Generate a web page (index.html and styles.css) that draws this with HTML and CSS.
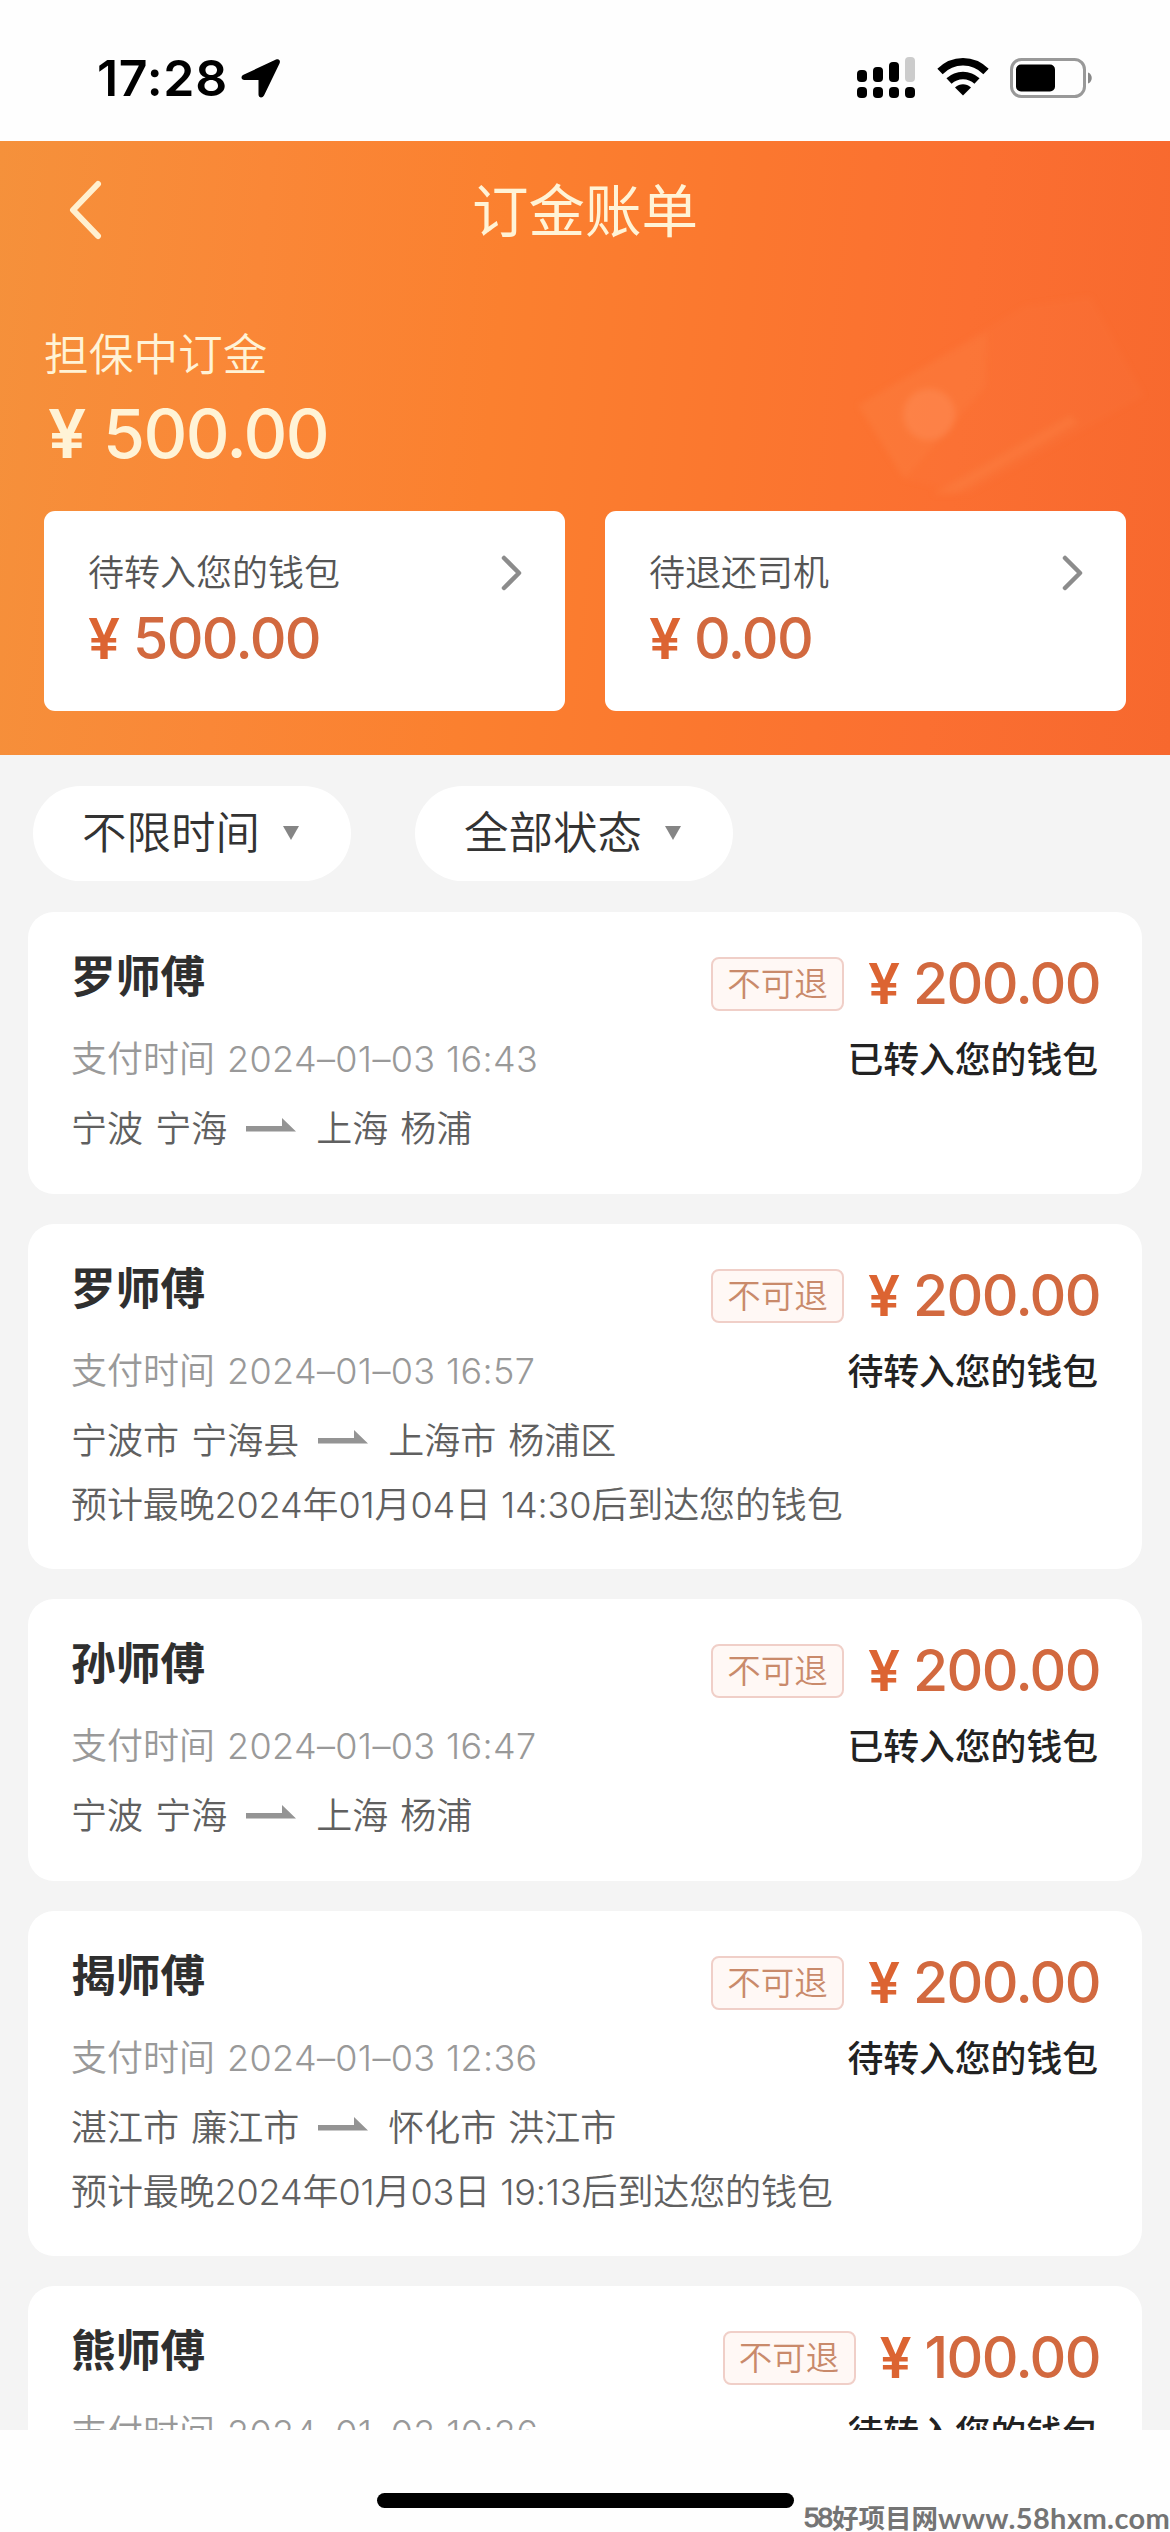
FILE: index.html
```
<!DOCTYPE html>
<html lang="zh-CN">
<head>
<meta charset="utf-8">
<title>订金账单</title>
<link rel="stylesheet" href="styles.css">
</head>
<body>
<svg class="defs" width="0" height="0" aria-hidden="true">
  <symbol id="route-arrow" viewBox="0 0 50 14"><path d="M0 8h36V0l14 13.500H0z"/></symbol>
  <symbol id="chevron" viewBox="0 0 22 36"><path d="M3 3l15 15L3 33"/></symbol>
</svg>
<div class="screen">
  <div class="statusbar">
    <span class="clock">17:28</span>
    <svg class="location" viewBox="0 0 40 40"><path d="M35 1.500 2.500 16.800C-.5 18.200 0 22 3.500 22H17.500V36.500C17.500 40 21.500 40.500 23 37.500L38.500 5.500C39.800 2.500 38 .2 35 1.500z"/></svg>
    <svg class="signal" viewBox="0 0 59 42">
      <rect x="0" y="13" width="10" height="12" rx="4"/><rect x="16" y="10" width="10" height="15" rx="4"/><rect x="32" y="5" width="10" height="20" rx="4"/><rect x="48" y="0" width="10" height="25" rx="4" fill="#ccc"/>
      <rect x="0" y="30" width="10" height="11" rx="4"/><rect x="16" y="30" width="10" height="11" rx="4"/><rect x="32" y="30" width="10" height="11" rx="4"/><rect x="48" y="30" width="10" height="11" rx="4"/>
    </svg>
    <svg class="wifi" viewBox="0 0 52 38">
      <path d="M3 13.500C16 .5 36 .5 49 13.500M12 23C20 15.500 32 15.500 40 23" fill="none" stroke="#000" stroke-width="7.500"/>
      <path d="M18 29.500C23 25.300 29 25.300 34 29.500L26 37.500z"/>
    </svg>
    <svg class="battery" viewBox="0 0 83 40">
      <rect x="1.500" y="1.500" width="73" height="37" rx="10" fill="none" stroke="#999" stroke-width="3"/>
      <rect x="6" y="6.500" width="39" height="27" rx="5"/>
      <path d="M78 14.500c5 1.500 5 9.500 0 11z" fill="#888"/>
    </svg>
  </div>

  <header class="hero">
    <svg class="banknote" viewBox="0 0 340 270" aria-hidden="true">
      <path d="M10 130 190 22 262 12 320 120 130 226 60 210z" fill="#ff9460" opacity=".06"/>
      <path d="M10 130 150 50 148 110 60 210z" fill="#ffa064" opacity=".1"/>
      <circle cx="87" cy="140" r="28" fill="#ff9868" opacity=".32"/>
      <path d="M90 226 240 140l8 9L116 226z" fill="#ffa064" opacity=".14"/>
    </svg>
    <div class="navbar">
      <svg class="back" viewBox="0 0 34 60"><path d="M29 4 4 30l25 26"/></svg>
      <h1>订金账单</h1>
    </div>
    <div class="held-label">担保中订金</div>
    <div class="held-amount"><span class="yen">¥</span><span class="num">500.00</span></div>
    <div class="wallets">
      <div class="wallet">
        <div class="wallet-label">待转入您的钱包<svg class="more"><use href="#chevron"/></svg></div>
        <div class="money"><span class="yen">¥</span><span class="num">500.00</span></div>
      </div>
      <div class="wallet">
        <div class="wallet-label">待退还司机<svg class="more"><use href="#chevron"/></svg></div>
        <div class="money"><span class="yen">¥</span><span class="num">0.00</span></div>
      </div>
    </div>
  </header>

  <main class="list">
    <div class="filters">
      <div class="filter"><span>不限时间</span><i class="caret"></i></div>
      <div class="filter"><span>全部状态</span><i class="caret"></i></div>
    </div>

    <article class="bill">
      <div class="bill-main">
        <h2>罗师傅</h2>
        <p class="paid">支付时间 <span class="date">2024–01–03 16:43</span></p>
        <p class="route">宁波 宁海<svg><use href="#route-arrow"/></svg>上海 杨浦</p>
      </div>
      <div class="bill-side">
        <div class="price"><span class="tag">不可退</span><div class="money"><span class="yen">¥</span><span class="num">200.00</span></div></div>
        <div class="state">已转入您的钱包</div>
      </div>
    </article>

    <article class="bill">
      <div class="bill-main">
        <h2>罗师傅</h2>
        <p class="paid">支付时间 <span class="date">2024–01–03 16:57</span></p>
        <p class="route">宁波市 宁海县<svg><use href="#route-arrow"/></svg>上海市 杨浦区</p>
        <p class="eta">预计最晚2024年01月04日 14:30后到达您的钱包</p>
      </div>
      <div class="bill-side">
        <div class="price"><span class="tag">不可退</span><div class="money"><span class="yen">¥</span><span class="num">200.00</span></div></div>
        <div class="state">待转入您的钱包</div>
      </div>
    </article>

    <article class="bill">
      <div class="bill-main">
        <h2>孙师傅</h2>
        <p class="paid">支付时间 <span class="date">2024–01–03 16:47</span></p>
        <p class="route">宁波 宁海<svg><use href="#route-arrow"/></svg>上海 杨浦</p>
      </div>
      <div class="bill-side">
        <div class="price"><span class="tag">不可退</span><div class="money"><span class="yen">¥</span><span class="num">200.00</span></div></div>
        <div class="state">已转入您的钱包</div>
      </div>
    </article>

    <article class="bill">
      <div class="bill-main">
        <h2>揭师傅</h2>
        <p class="paid">支付时间 <span class="date">2024–01–03 12:36</span></p>
        <p class="route">湛江市 廉江市<svg><use href="#route-arrow"/></svg>怀化市 洪江市</p>
        <p class="eta">预计最晚2024年01月03日 19:13后到达您的钱包</p>
      </div>
      <div class="bill-side">
        <div class="price"><span class="tag">不可退</span><div class="money"><span class="yen">¥</span><span class="num">200.00</span></div></div>
        <div class="state">待转入您的钱包</div>
      </div>
    </article>

    <article class="bill">
      <div class="bill-main">
        <h2>熊师傅</h2>
        <p class="paid">支付时间 <span class="date">2024–01–02 10:26</span></p>
      </div>
      <div class="bill-side">
        <div class="price"><span class="tag">不可退</span><div class="money"><span class="yen">¥</span><span class="num">100.00</span></div></div>
        <div class="state">待转入您的钱包</div>
      </div>
    </article>
  </main>

  <footer class="home">
    <div class="home-bar"></div>
    <div class="watermark"><span class="wm-num">58</span><span class="wm-cn">好项目网</span><span class="wm-url">www.58hxm.com</span></div>
  </footer>
</div>
</body>
</html>
```
FILE: styles.css
```
* { box-sizing: border-box; margin: 0; padding: 0; }
body {
  width: 1170px;
  background: #fff;
  font-family: Inter, "Noto Sans CJK SC", sans-serif;
  color: #333;
}
.defs { display: block; height: 0; }
.screen { width: 1170px; height: 2532px; display: flex; flex-direction: column; overflow: hidden; }
svg { flex: none; }

/* status bar */
.statusbar { height: 141px; flex: none; display: flex; align-items: flex-start; padding: 57px 78px 0 97px; background: #fefefe; }
.clock { width: 144px; font-size: 50px; line-height: 42px; font-weight: 600; letter-spacing: 0.700px; color: #000; white-space: nowrap; }
.location { width: 40px; height: 40px; margin-top: 1px; margin-right: auto; }
.signal { width: 59px; height: 42px; margin-right: 21px; }
.wifi { width: 52px; height: 38px; margin-top: 1px; margin-right: 21px; }
.battery { width: 83px; height: 40px; margin-top: 1px; margin-right: -1px; }

/* orange header */
.hero {
  position: relative;
  height: 614px;
  flex: none;
  padding: 0 44px;
  color: #fff3d6;
  background: linear-gradient(96deg, #f5913b 0%, #fa8737 22%, #fb802f 42%, #fb772f 62%, #fb6f31 80%, #f7682e 100%);
}
.banknote { position: absolute; left: 842px; top: 144px; width: 328px; height: 250px; filter: blur(3px); }
.navbar { position: relative; height: 138px; display: flex; align-items: center; justify-content: center; }
.back { position: absolute; left: 25px; top: 39px; width: 34px; height: 60px; fill: none; stroke: #fff0d0; stroke-width: 6; stroke-linecap: round; stroke-linejoin: round; }
h1 { font-size: 56.500px; line-height: 80px; font-weight: 400; padding-top: 3px; }
.held-label { margin-top: 43px; height: 64px; line-height: 66px; font-size: 44.700px; font-weight: 350; }
.held-amount { display: flex; align-items: center; height: 80px; margin-top: 7px; padding-left: 4px; font-size: 68px; font-weight: 500; letter-spacing: -1.600px; }
.held-amount .yen { width: 55px; }
.yen { font-weight: 600; }
.wallets { display: flex; gap: 40px; margin-top: 38px; }
.wallet { flex: 1; height: 200px; border-radius: 11px; background: #fff; padding: 38px 42px 0 44px; }
.wallet-label { display: flex; align-items: center; justify-content: space-between; height: 48px; line-height: 44px; font-size: 36px; font-weight: 350; color: #555; }
.more { width: 22px; height: 36px; fill: none; stroke: #8c8c8c; stroke-width: 4.500; stroke-linecap: round; stroke-linejoin: round; }
.money { display: flex; align-items: center; font-size: 57px; line-height: 60px; font-weight: 500; letter-spacing: -1.600px; color: #d2693f; white-space: nowrap; }
.money .yen { width: 45px; color: #dc6432; }
.money .num { margin-right: -2px; }
.wallet .money { margin-top: 12px; }

/* filters and bill list */
.list { height: 1675px; flex: none; overflow: hidden; background: #f4f4f4; padding: 31px 28px 0; }
.filters { display: flex; gap: 64px; padding-left: 5px; margin-bottom: 31px; }
.filter { display: flex; align-items: center; width: 318px; height: 95px; border-radius: 48px; background: #fff; padding: 0 0 2px 49px; font-size: 44.500px; font-weight: 350; color: #333; }
.filter span { padding-bottom: 7px; }
.caret { margin-left: 23px; border: 8px solid transparent; border-bottom: 0; border-top: 14px solid #858585; }
.bill { display: flex; justify-content: space-between; height: 282px; margin-bottom: 30px; border-radius: 26px; background: #fff; padding: 35px 44px 0 43px; }
.bill:has(.eta) { height: 345px; }
.bill p { white-space: nowrap; }
h2 { font-size: 44.700px; line-height: 60px; font-weight: 700; color: #2f2f2f; }
.paid, .route, .eta { height: 48px; line-height: 48px; font-size: 36px; font-weight: 350; color: #606060; }
.paid { margin-top: 28px; color: #999; display: flex; }
.date { margin-left: 12px; font-weight: 300; letter-spacing: 0.350px; }
.route { margin-top: 22px; display: flex; align-items: center; word-spacing: 2px; }
.route svg { width: 50px; height: 14px; margin: -8px 20px 0 19px; fill: #949494; }
.eta { margin-top: 16px; letter-spacing: -0.120px; }
.bill-side { display: flex; flex-direction: column; align-items: flex-end; width: 0; padding-top: 7px; }
.price { display: flex; align-items: center; height: 60px; }
.tag { width: 133px; height: 54px; margin-right: 24px; border: 2px solid #f0cfc8; border-radius: 8px; background: #fff8f5; display: flex; align-items: center; justify-content: center; flex: none; font-size: 33.500px; line-height: 46px; font-weight: 350; color: #c98a6b; }
.state { margin-top: 22px; height: 48px; line-height: 48px; font-size: 35.800px; font-weight: 500; color: #222; white-space: nowrap; }

/* bottom strip */
.home { position: relative; height: 102px; flex: none; padding-top: 63px; background: #fefefe; }
.home-bar { width: 417px; height: 15px; margin-left: 377px; border-radius: 8px; background: #000; }
.watermark { position: absolute; left: 804px; top: 73px; display: flex; align-items: center; height: 30px; line-height: 30px; color: #747474; white-space: nowrap; font-weight: 700; }
.wm-num { font-family: "Liberation Sans", sans-serif; font-size: 28px; width: 28px; letter-spacing: -2px; font-weight: 400; -webkit-text-stroke: 1px #747474; }
.wm-cn { font-size: 26.500px; width: 106px; font-weight: 700; }
.wm-url { font-family: Lato, sans-serif; font-size: 29px; letter-spacing: 0.400px; }
```
